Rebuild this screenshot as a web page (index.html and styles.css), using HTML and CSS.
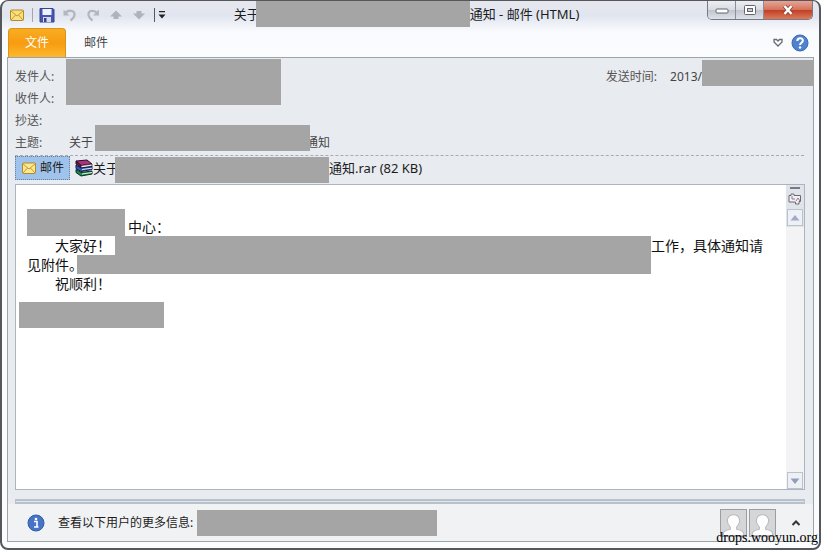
FILE: index.html
```html
<!DOCTYPE html>
<html lang="zh-CN">
<head>
  <meta charset="UTF-8" />
  <title>邮件 (HTML)</title>
  <meta name="viewport" content="width=device-width, initial-scale=1.0" />
  <link rel="stylesheet" href="styles.css">
</head>
<body>

  <div class="window">
    <header class="titlebar">
      <div class="quick-access">
        <svg class="icon" viewBox="0 0 16 16" aria-hidden="true">
          <rect x="1.5" y="3" width="13" height="10.5" rx="1" fill="#f9e07a" stroke="#b08a2c"/>
          <path d="M2 4l6 5 6-5M2 13l4.500-5M14 13L9.500 8" fill="none" stroke="#c29a38"/>
        </svg>
        <span class="divider"></span>
        <button class="tool" aria-label="保存">
          <svg class="icon" viewBox="0 0 16 16">
            <path d="M1 1.500h13l1 1V15H1z" fill="#4656b4" stroke="#35448f"/>
            <rect x="3.500" y="2" width="9" height="6" fill="#eef3fc"/>
            <rect x="4" y="10" width="8" height="5" fill="#d5dbea"/>
            <rect x="5" y="11" width="2.500" height="4" fill="#35448f"/>
          </svg>
        </button>
        <button class="tool" aria-label="撤消">
          <svg class="icon" viewBox="0 0 16 16">
            <path d="M3 6.500C6 2.500 13 3 12.500 8c-.2 2.500-2 4-4 5.500" fill="none" stroke="#b4b7bf" stroke-width="2.400"/>
            <path d="M1.500 2.500v6h6z" fill="#b4b7bf"/>
          </svg>
        </button>
        <button class="tool" aria-label="重复">
          <svg class="icon" viewBox="0 0 16 16">
            <path d="M12.500 6.500C9.500 2.500 3 3 3.500 8c.2 2.500 2 4 4 5.500" fill="none" stroke="#b4b7bf" stroke-width="2.200"/>
            <path d="M14 2.500v6H8z" fill="#b4b7bf"/>
          </svg>
        </button>
        <button class="tool" aria-label="上一项">
          <svg class="icon" viewBox="0 0 16 16"><path d="M8 3.500l6 6h-3.500V12h-5V9.500H2z" fill="#b0b3b9"/></svg>
        </button>
        <button class="tool" aria-label="下一项">
          <svg class="icon" viewBox="0 0 16 16"><path d="M8 12.500l6-6h-3.500V4h-5v2.500H2z" fill="#b0b3b9"/></svg>
        </button>
        <span class="divider dark"></span>
        <button class="tool small" aria-label="自定义快速访问工具栏">
          <svg viewBox="0 0 8 8" width="8" height="8"><path d="M1 0h6v1.300H1zM.5 3.500h7L4 7.500z" fill="#222"/></svg>
        </button>
      </div>

      <h1 class="title"><span>关于</span><span class="redact title-redact"></span><span>通知 - 邮件 (HTML)</span></h1>

      <div class="controls">
        <button class="control" aria-label="最小化">
          <svg viewBox="0 0 14 10" width="14" height="10"><rect x="1" y="4" width="12" height="4" rx="1" fill="#fff" stroke="#62656c"/></svg>
        </button>
        <button class="control" aria-label="最大化">
          <svg viewBox="0 0 14 12" width="14" height="12"><rect x="1.500" y="1.500" width="11" height="9" rx="1" fill="#fff" stroke="#62656c"/><rect x="4.500" y="4.500" width="5" height="3" fill="#ccc" stroke="#62656c"/></svg>
        </button>
        <button class="control close" aria-label="关闭">
          <svg viewBox="0 0 12 12" width="12" height="12"><path d="M2.500 2l7 8M9.500 2l-7 8" stroke="#7c4038" stroke-width="4"/><path d="M2.500 2l7 8M9.500 2l-7 8" stroke="#fff" stroke-width="2.500"/></svg>
        </button>
      </div>
    </header>

    <nav class="ribbon">
      <button class="tab file">文件</button>
      <button class="tab">邮件</button>
      <div class="ribbon-end">
        <button class="tool small" aria-label="展开功能区">
          <svg viewBox="0 0 12 10" width="12" height="10"><path d="M2 1.500h2.500L6 3l1.500-1.500H10V4L6 8 2 4z" fill="#fff" stroke="#666a73" stroke-width="1.300"/></svg>
        </button>
        <button class="tool" aria-label="帮助">
          <svg viewBox="0 0 18 18" width="18" height="18">
            <circle cx="9" cy="9" r="8" fill="#4f83cf" stroke="#3b68b4"/>
            <path d="M6.300 7c0-3.600 5.600-3.600 5.600-.4C11.900 8.700 9 8.700 9 11" fill="none" stroke="#fff" stroke-width="2"/>
            <circle cx="9" cy="13.500" r="1.200" fill="#fff"/>
          </svg>
        </button>
      </div>
    </nav>

    <main class="panel">
      <div class="headers">
        <span class="label">发件人:</span>
        <span class="redact people-redact"></span>
        <div class="sent">
          <span class="label">发送时间:</span>
          <span>2013/</span>
          <span class="redact date-redact"></span>
        </div>
        <span class="label to">收件人:</span>
        <span class="label cc">抄送:</span>
        <span class="label subject">主题:</span>
        <div class="subject-text"><span>关于</span><span class="redact subject-redact"></span><span>通知</span></div>
      </div>

      <div class="attachments">
        <button class="message-tab">
          <svg class="icon" viewBox="0 0 16 16" aria-hidden="true">
            <rect x="1.500" y="3" width="13" height="10.500" rx="1" fill="#fbe88f" stroke="#b08a2c"/>
            <path d="M2 4l6 5 6-5M2 13l4.500-5M14 13L9.500 8" fill="none" stroke="#c29a38"/>
          </svg>
          邮件
        </button>
        <a class="attachment" href="#">
          <svg class="rar" viewBox="0 0 18 18" aria-hidden="true">
            <path d="M1 2l11-1 5 4-11 1.500z" fill="#a8327c" stroke="#2b1020"/>
            <path d="M1 2v3l5 3.500V6.500z" fill="#6d1b4c" stroke="#2b1020"/>
            <path d="M6 6.500L17 5v2.500L6 9z" fill="#f1e4ee" stroke="#2b1020" stroke-width=".7"/>
            <path d="M1 6l5 3 11-1.500v3L6 12.500 1 9.500z" fill="#2c58b5" stroke="#101c48"/>
            <path d="M7 10.500l10-1.300" stroke="#dfe8ff"/>
            <path d="M1 10.500l5 3L17 12v3L6 17l-5-3.500z" fill="#228a52" stroke="#082f1a"/>
            <path d="M7 15l10-1.500" stroke="#dff5e4"/>
          </svg>
          <span>关于</span><span class="redact file-redact"></span><span>通知.rar (82 KB)</span>
        </a>
      </div>

      <div class="reader">
        <article class="message">
          <p class="greeting"><span class="redact name-redact"></span>中心：</p>
          <p class="indent">大家好！<span class="redact line-redact"></span>工作，具体通知请</p>
          <p>见附件。<span class="redact rest-redact"></span></p>
          <p class="indent">祝顺利！</p>
          <span class="redact sign-redact"></span>
        </article>
        <div class="scrollbar">
          <span class="split-handle"></span>
          <button class="pages" aria-label="选择浏览对象">
            <svg viewBox="0 0 14 14" width="14" height="14"><path d="M1 3.500h2V2h3v1.500h6.500v6H11V12H7.500v-2H1z" fill="#f3eff5" stroke="#6c6874"/><path d="M4 4v3h3M8 9l2-3 2 3" fill="none" stroke="#8a7c92"/></svg>
          </button>
          <button class="arrow" aria-label="向上滚动"><svg viewBox="0 0 10 6" width="10" height="6"><path d="M5 0l4.500 5.500h-9z" fill="#a5a8cc"/></svg></button>
          <button class="arrow down" aria-label="向下滚动"><svg viewBox="0 0 10 6" width="10" height="6"><path d="M5 6L.5.500h9z" fill="#949dc0"/></svg></button>
        </div>
      </div>

      <div class="splitter"></div>

      <footer class="people">
        <svg viewBox="0 0 18 18" width="18" height="18" aria-hidden="true">
          <circle cx="9" cy="9" r="8" fill="#4674c8" stroke="#345ca8"/>
          <circle cx="9" cy="5" r="1.300" fill="#fff"/>
          <path d="M7 7.500h3v5M7 13h4.500" fill="none" stroke="#fff" stroke-width="1.600"/>
        </svg>
        <span class="people-text">查看以下用户的更多信息:</span>
        <span class="redact user-redact"></span>
        <div class="avatars">
          <svg class="avatar" viewBox="0 0 24 24"><path d="M2 24c0-4 2-5 7-6v-2c-5-5-3-12 3-12s8 7 3 12v2c5 1 7 2 7 6z" fill="#fdfdfd" stroke="#b8babd"/></svg>
          <svg class="avatar" viewBox="0 0 24 24"><path d="M2 24c0-4 2-5 7-6v-2c-5-5-3-12 3-12s8 7 3 12v2c5 1 7 2 7 6z" fill="#fdfdfd" stroke="#b8babd"/></svg>
        </div>
        <button class="tool small" aria-label="展开人员窗格">
          <svg viewBox="0 0 10 8" width="10" height="8"><path d="M1.500 6L5 2.500 8.500 6" fill="none" stroke="#333" stroke-width="2"/></svg>
        </button>
      </footer>
    </main>

    <span class="watermark">drops.wooyun.org</span>
  </div>

</body>
</html>
```

FILE: styles.css
```css
* {
  box-sizing: border-box;
}

body {
  margin: 0;
  background: #fff;
  font-family: "Noto Sans", "Noto Sans CJK SC", sans-serif;
  font-size: 12px;
  line-height: 18px;
  color: #1c1c1c;
}

button {
  font: inherit;
  color: inherit;
  padding: 0;
  border: 0;
  background: none;
}

svg {
  flex: none;
}

.window {
  position: relative;
  display: flex;
  flex-direction: column;
  min-height: 100vh;
  padding: 0 5px 6px;
  border: 2px solid #55575c;
  border-top-width: 1px;
  border-radius: 8px;
  background: linear-gradient(#e6e8ee, #e1e5ef 15px, #f8fafd 30px, #fbfcfe 56px);
}

/* covers the text on both sides of it */
.redact {
  position: relative;
  flex: none;
  display: inline-block;
  background: #a5a5a5;
}

.icon {
  display: block;
  width: 16px;
  height: 16px;
}

/* title bar */
.titlebar {
  display: grid;
  grid-template-columns: 1fr auto 1fr;
  align-items: start;
  height: 27px;
}

.quick-access {
  display: flex;
  align-items: center;
  gap: 7px;
  height: 28px;
  padding-left: 2px;
}

.tool {
  display: flex;
  align-items: center;
  justify-content: center;
  min-width: 16px;
}

.small {
  min-width: 8px;
}

.divider {
  width: 1px;
  height: 14px;
  margin-right: -1px;
  background: #a3a6ad;
}

.dark {
  margin-right: -4px;
  background: #55585f;
}

.title {
  display: flex;
  align-items: center;
  height: 25px;
  margin: 0;
  padding-right: 8px;
  font-size: 13px;
  font-weight: normal;
  white-space: pre;
}

.title-redact {
  width: 214px;
  height: 26px;
  margin-left: -4px;
}

.controls {
  display: flex;
  justify-self: end;
  margin-right: 1px;
  border: 1px solid #777a82;
  border-top: 0;
  border-radius: 0 0 5px 5px;
  overflow: hidden;
}

.control {
  display: flex;
  align-items: center;
  justify-content: center;
  width: 28px;
  height: 18px;
  border-right: 1px solid #8b8e95;
  background: linear-gradient(#eceef2, #d8dbe2 50%, #c0c4cd 51%, #dfe2e9);
}

.close {
  width: 48px;
  border-right: 0;
  background: linear-gradient(#e6a595, #d5705a 50%, #c03f25 51%, #dc7a5c);
}

/* ribbon tabs */
.ribbon {
  display: flex;
  height: 29px;
}

.tab {
  width: 58px;
  margin-left: 1px;
  color: #444;
}

.file {
  border: 1px solid #dc9316;
  border-bottom: 0;
  border-radius: 4px 4px 0 0;
  background: linear-gradient(#f8ad22, #f79c11 50%, #fdb82c);
  color: #fff;
}

.ribbon-end {
  display: flex;
  align-items: center;
  gap: 7px;
  margin-left: auto;
  padding-right: 5px;
}

/* message window */
.panel {
  flex: 1;
  display: flex;
  flex-direction: column;
  border: 1px solid #9da3ab;
  background: #e8ebf0;
}

.headers {
  display: grid;
  grid-template-columns: 51px 1fr auto;
  grid-template-rows: 23px 22px 22px 22px;
  align-items: center;
  margin: 0 9px 0 7px;
  padding: 7px 0 1px;
  border-bottom: 1px dashed #a7abb3;
  color: #444;
}

.label {
  grid-column: 1;
  color: #555;
}

.people-redact {
  grid-area: 1 / 2 / 3 / 3;
  align-self: start;
  width: 215px;
  height: 46px;
  margin-top: -6px;
}

.sent {
  grid-area: 1 / 3;
  display: flex;
  align-items: center;
  margin-right: -10px;
}

.sent .label {
  margin-right: 13px;
}

.date-redact {
  width: 112px;
  height: 26px;
  margin-top: -8px;
}

.to {
  grid-row: 2;
}

.cc {
  grid-row: 3;
}

.subject {
  grid-row: 4;
}

.subject-text {
  grid-area: 4 / 2 / 5 / 4;
  display: flex;
  align-items: center;
  padding-left: 3px;
}

.subject-redact {
  width: 215px;
  height: 26px;
  margin: -10px -4px 0 2px;
}

.attachments {
  display: flex;
  align-items: flex-start;
  gap: 5px;
  height: 28px;
  padding-left: 7px;
}

.message-tab {
  display: flex;
  align-items: center;
  gap: 3px;
  height: 24px;
  padding: 0 5px;
  border: 1px dotted #6a7f9c;
  background: #9fc3ea;
}

.attachment {
  display: flex;
  align-items: flex-start;
  font-size: 13px;
  line-height: 24px;
  color: #1c1c1c;
  text-decoration: none;
}

.rar {
  width: 18px;
  height: 18px;
  margin-top: 3px;
}

.file-redact {
  width: 214px;
  height: 26px;
  margin: 1px 0 0 -4px;
}

.reader {
  flex: 1;
  display: flex;
  min-height: 200px;
  margin: 0 8px 0 7px;
  border: 1px solid #aeb4bd;
  background: #fff;
}

.message {
  flex: 1;
  padding: 24px 23px 20px 11px;
  font-size: 14px;
  line-height: 19px;
  color: #111;
}

.message p {
  display: flex;
  align-items: center;
  height: 19px;
  margin: 0;
  white-space: pre;
}

.message .greeting {
  align-items: flex-end;
  height: 27px;
}

.message .indent {
  padding-left: 28px;
}

.name-redact {
  width: 98px;
  height: 27px;
  margin-right: 3px;
}

.line-redact {
  flex: 1;
  height: 19px;
  margin-left: 4px;
}

.rest-redact {
  flex: 1;
  height: 19px;
  margin: 0 112px 0 -6px;
}

.sign-redact {
  width: 145px;
  height: 26px;
  margin: 9px 0 0 -8px;
}

.scrollbar {
  display: flex;
  flex-direction: column;
  align-items: center;
  width: 18px;
  background: linear-gradient(#dfe3ea 42px, #f3f3f5 42px);
}

.split-handle {
  width: 10px;
  height: 2px;
  margin: 2px 0 3px;
  background: #777a82;
}

.pages {
  display: flex;
  margin-bottom: 3px;
}

.arrow {
  display: flex;
  align-items: center;
  justify-content: center;
  width: 16px;
  height: 17px;
  border: 1px solid #bcc2cd;
  background: #edf0f5;
}

.down {
  margin-top: auto;
}

.splitter {
  height: 5px;
  margin: 9px 8px 0 7px;
  border: 1px solid #b9c1ca;
  border-width: 2px 1px;
  background: #dde5ea;
}

/* people pane */
.people {
  display: flex;
  align-items: center;
  height: 37px;
  padding: 0 12px 0 19px;
  background: #f1f2f4;
}

.people-text {
  margin-left: 13px;
}

.user-redact {
  width: 240px;
  height: 26px;
  margin-left: 4px;
}

.avatars {
  display: flex;
  gap: 2px;
  margin: 0 15px 0 auto;
}

.avatar {
  width: 27px;
  height: 28px;
  border: 1px solid #9b9da1;
  background: #d5d6d8;
}

.watermark {
  position: absolute;
  right: 1px;
  bottom: 1px;
  font-family: "Liberation Serif", serif;
  font-size: 14px;
  line-height: 18px;
  color: #000;
}
```
